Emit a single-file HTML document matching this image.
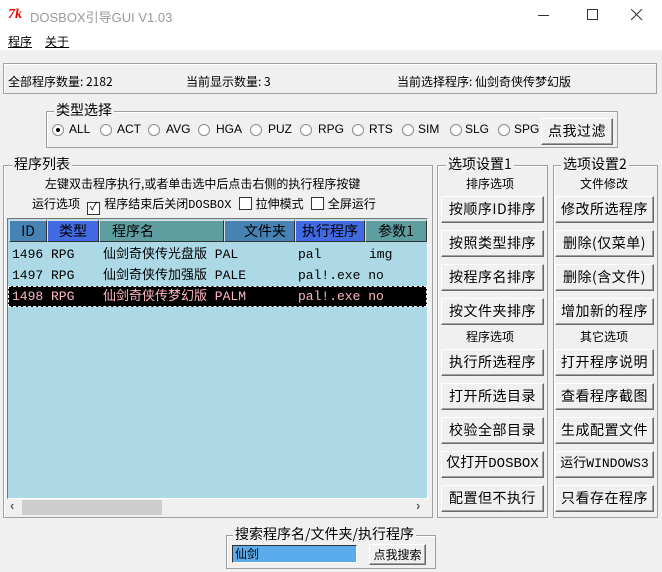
<!DOCTYPE html>
<html><head><meta charset="utf-8"><style>
*{margin:0;padding:0;box-sizing:border-box}
body{width:662px;height:572px;background:#f0f0f0;position:relative;overflow:hidden;font-family:"Liberation Sans","Noto Sans CJK SC",sans-serif;font-size:12px;color:#000}
.a{position:absolute;white-space:nowrap}
.gb{position:absolute;border:1px solid #a0a0a0;box-shadow:inset 1px 1px 0 #fff}
.gt{position:absolute;background:#f0f0f0;padding:0 2px;font-size:14px;line-height:16px;font-family:"Noto Sans CJK SC",sans-serif}
.btn{position:absolute;background:#f0f0f0;border:1px solid;border-color:#fff #696969 #696969 #fff;box-shadow:inset -1px -1px 0 #a0a0a0;font-family:"Noto Sans CJK SC",sans-serif;font-size:14px;text-align:center;line-height:24px;white-space:nowrap;letter-spacing:0.5px}
.hd{position:absolute;top:220px;height:22px;border:1px solid;border-color:#ddd #333 #333 #ddd;font-family:"Noto Sans CJK SC",sans-serif;font-size:14px;line-height:20px;text-align:center}
.rad{position:absolute;top:124px;width:12px;height:12px;border-radius:50%;border:1px solid #888;background:#fff}
.rl{position:absolute;top:122px;font-size:12px}
.row{position:absolute;left:8px;width:419px;height:21px;line-height:21px;font-family:"Liberation Mono","Noto Sans CJK SC",monospace;font-size:13px}
.row span{position:absolute}
.cb{display:inline-block;width:13px;height:13px;border:1px solid #333;background:#fff;vertical-align:-2px;margin-right:4px;font-size:11px;line-height:11px;text-align:center}
</style></head><body>
<div class="a" style="left:0;top:0;width:662px;height:50px;background:#fff"></div>
<div class="a" style="left:8px;top:7px;color:#e00;font-weight:bold;font-style:italic;font-size:14px;font-family:'Liberation Serif',serif">7k</div>
<div class="a" style="left:30px;top:7px;font-size:13px;color:#999;font-family:'Liberation Sans','Noto Sans CJK SC',sans-serif">DOSBOX引导GUI V1.03</div>
<div class="a" style="left:538px;top:15px;width:11px;height:1px;background:#333"></div>
<div class="a" style="left:587px;top:9px;width:11px;height:11px;border:1px solid #333"></div>
<svg class="a" style="left:631px;top:9px" width="12" height="12"><path d="M0 0L11 11M11 0L0 11" stroke="#333" stroke-width="1"/></svg>
<div class="a" style="left:8px;top:33px;font-family:'Noto Sans CJK SC',sans-serif;font-size:12px;text-decoration:underline">程序</div>
<div class="a" style="left:45px;top:33px;font-family:'Noto Sans CJK SC',sans-serif;font-size:12px;text-decoration:underline">关于</div>

<div class="gb" style="left:3px;top:63px;width:654px;height:31px"></div>
<div class="a" style="left:8px;top:73px;font-family:'Noto Sans CJK SC',sans-serif">全部程序数量: 2182</div>
<div class="a" style="left:186px;top:73px;font-family:'Noto Sans CJK SC',sans-serif">当前显示数量: 3</div>
<div class="a" style="left:397px;top:73px;font-family:'Noto Sans CJK SC',sans-serif">当前选择程序: 仙剑奇侠传梦幻版</div>

<div class="gb" style="left:46px;top:111px;width:572px;height:37px"></div>
<div class="gt" style="left:54px;top:102px">类型选择</div>
<div class="rad" style="left:52px"><i style="position:absolute;left:3px;top:3px;width:4px;height:4px;border-radius:50%;background:#000"></i></div><div class="rl" style="left:69px">ALL</div>
<div class="rad" style="left:100px"></div><div class="rl" style="left:117px">ACT</div>
<div class="rad" style="left:148px"></div><div class="rl" style="left:166px">AVG</div>
<div class="rad" style="left:198px"></div><div class="rl" style="left:216px">HGA</div>
<div class="rad" style="left:250px"></div><div class="rl" style="left:268px">PUZ</div>
<div class="rad" style="left:300px"></div><div class="rl" style="left:318px">RPG</div>
<div class="rad" style="left:352px"></div><div class="rl" style="left:369px">RTS</div>
<div class="rad" style="left:402px"></div><div class="rl" style="left:418px">SIM</div>
<div class="rad" style="left:450px"></div><div class="rl" style="left:465px">SLG</div>
<div class="rad" style="left:498px"></div><div class="rl" style="left:514px">SPG</div>
<div class="btn" style="left:541px;top:118px;width:72px;height:27px">点我过滤</div>

<div class="gb" style="left:3px;top:165px;width:430px;height:353px"></div>
<div class="gt" style="left:12px;top:156px">程序列表</div>
<div class="a" style="left:45px;top:175px;font-family:'Noto Sans CJK SC',sans-serif;font-size:12px">左键双击程序执行,或者单击选中后点击右侧的执行程序按键</div>
<div class="a" style="left:32px;top:195px;font-family:'Liberation Mono','Noto Sans CJK SC',monospace;font-size:12px">运行选项 <span class="cb">✓</span>程序结束后关闭DOSBOX <span class="cb"></span>拉伸模式 <span class="cb"></span>全屏运行</div>

<div class="a" style="left:7px;top:218px;width:421px;height:281px;background:#add8e6;border:1px solid #777;border-right-color:#fff;border-bottom-color:#fff"></div>
<div class="hd" style="left:9px;width:38px;background:#4682b4">ID</div>
<div class="hd" style="left:47px;width:52px;background:#4169e1">类型</div>
<div class="hd" style="left:99px;width:125px;background:#5f9ea0;text-align:left;padding-left:12px">程序名</div>
<div class="hd" style="left:224px;width:71px;background:#4682b4;text-align:right;padding-right:8px">文件夹</div>
<div class="hd" style="left:295px;width:70px;background:#4169e1">执行程序</div>
<div class="hd" style="left:365px;width:62px;background:#5f9ea0">参数1</div>
<div class="row" style="top:244px"><span style="left:4px">1496 RPG</span><span style="left:95px">仙剑奇侠传光盘版 PAL</span><span style="left:290px">pal</span><span style="left:361px">img</span></div>
<div class="row" style="top:265px"><span style="left:4px">1497 RPG</span><span style="left:95px">仙剑奇侠传加强版 PALE</span><span style="left:290px">pal!.exe no</span></div>
<div class="row" style="top:286px;background:#000;color:#ffb6c1;outline:1px dashed #fff;outline-offset:-1px"><span style="left:4px">1498 RPG</span><span style="left:95px">仙剑奇侠传梦幻版 PALM</span><span style="left:290px">pal!.exe no</span></div>

<div class="a" style="left:7px;top:499px;width:421px;height:17px;background:#f0f0f0"></div>
<div class="a" style="left:22px;top:500px;width:140px;height:15px;background:#cdcdcd"></div>
<div class="a" style="left:10px;top:498px;font-size:13px;color:#606060;font-weight:bold">‹</div>
<div class="a" style="left:416px;top:498px;font-size:13px;color:#606060;font-weight:bold">›</div>

<div class="gb" style="left:437px;top:165px;width:111px;height:353px"></div>
<div class="gt" style="left:446px;top:156px">选项设置1</div>
<div class="a" style="left:466px;top:175px;font-family:'Noto Sans CJK SC',sans-serif">排序选项</div>
<div class="btn" style="left:441px;top:196px;width:103px;height:27px">按顺序ID排序</div>
<div class="btn" style="left:441px;top:230px;width:103px;height:27px">按照类型排序</div>
<div class="btn" style="left:441px;top:264px;width:103px;height:27px">按程序名排序</div>
<div class="btn" style="left:441px;top:298px;width:103px;height:27px">按文件夹排序</div>
<div class="a" style="left:466px;top:328px;font-family:'Noto Sans CJK SC',sans-serif">程序选项</div>
<div class="btn" style="left:441px;top:349px;width:103px;height:27px">执行所选程序</div>
<div class="btn" style="left:441px;top:383px;width:103px;height:27px">打开所选目录</div>
<div class="btn" style="left:441px;top:417px;width:103px;height:27px">校验全部目录</div>
<div class="btn" style="left:441px;top:451px;width:103px;height:27px;font-family:'Liberation Mono','Noto Sans CJK SC',monospace;letter-spacing:0">仅打开DOSBOX</div>
<div class="btn" style="left:441px;top:485px;width:103px;height:27px">配置但不执行</div>

<div class="gb" style="left:553px;top:165px;width:105px;height:353px"></div>
<div class="gt" style="left:561px;top:156px">选项设置2</div>
<div class="a" style="left:580px;top:175px;font-family:'Noto Sans CJK SC',sans-serif">文件修改</div>
<div class="btn" style="left:555px;top:196px;width:99px;height:27px">修改所选程序</div>
<div class="btn" style="left:555px;top:230px;width:99px;height:27px">删除(仅菜单)</div>
<div class="btn" style="left:555px;top:264px;width:99px;height:27px">删除(含文件)</div>
<div class="btn" style="left:555px;top:298px;width:99px;height:27px">增加新的程序</div>
<div class="a" style="left:580px;top:328px;font-family:'Noto Sans CJK SC',sans-serif">其它选项</div>
<div class="btn" style="left:555px;top:349px;width:99px;height:27px">打开程序说明</div>
<div class="btn" style="left:555px;top:383px;width:99px;height:27px">查看程序截图</div>
<div class="btn" style="left:555px;top:417px;width:99px;height:27px">生成配置文件</div>
<div class="btn" style="left:555px;top:451px;width:99px;height:27px;font-family:'Liberation Mono','Noto Sans CJK SC',monospace;letter-spacing:0;font-size:13px">运行WINDOWS3</div>
<div class="btn" style="left:555px;top:485px;width:99px;height:27px">只看存在程序</div>

<div class="gb" style="left:226px;top:535px;width:210px;height:34px"></div>
<div class="gt" style="left:233px;top:526px">搜索程序名/文件夹/执行程序</div>
<div class="a" style="left:232px;top:545px;width:125px;height:18px;background:#5aacec;border:1px solid;border-color:#333 #fff #fff #333;font-family:'Noto Sans CJK SC',sans-serif;font-size:12px;line-height:15px;padding-left:2px">仙剑</div>
<div class="btn" style="left:369px;top:544px;width:57px;height:21px;font-size:12px;line-height:19px;letter-spacing:0">点我搜索</div>
</body></html>
